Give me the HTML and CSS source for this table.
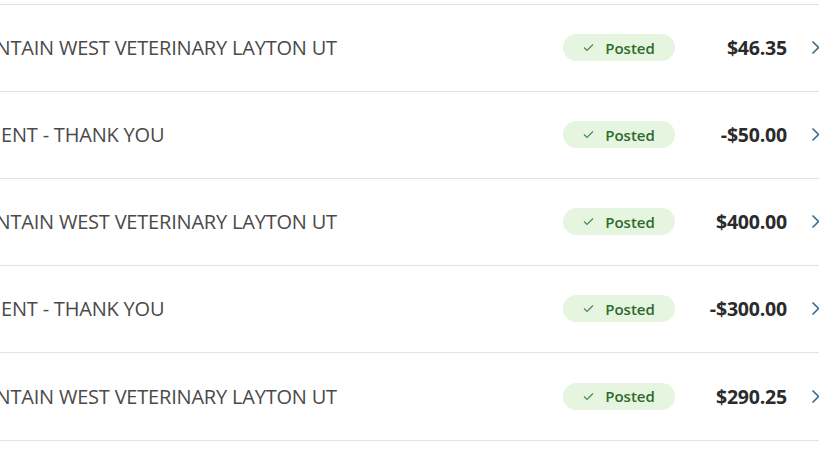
FILE: index.html
```html
<!DOCTYPE html>
<html lang="en">

<head>
    <meta charset="UTF-8">
    <meta name="viewport" content="width=device-width, initial-scale=1.0">
    <title>Transactions</title>
    <link rel="stylesheet" href="styles.css">
</head>

<body>
    <ul class="tx-list">
        <li class="tx-row">
            <span class="tx-desc">MOUNTAIN WEST VETERINARY LAYTON UT</span>
            <span class="tx-status"><svg class="tick" width="11" height="9" viewBox="0 0 11 9"><path d="M1 4.5 L4 7.5 L10 1.5" fill="none" stroke="currentColor" stroke-width="1.2"/></svg>Posted</span>
            <span class="tx-amount">$46.35</span>
            <span class="tx-more"><svg width="10" height="15" viewBox="0 0 10 15"><path d="M1.5 1.5 L7.5 7.5 L1.5 13.5" fill="none" stroke="currentColor" stroke-width="1.6"/></svg></span>
        </li>
        <li class="tx-row">
            <span class="tx-desc">PAYMENT - THANK YOU</span>
            <span class="tx-status"><svg class="tick" width="11" height="9" viewBox="0 0 11 9"><path d="M1 4.5 L4 7.5 L10 1.5" fill="none" stroke="currentColor" stroke-width="1.2"/></svg>Posted</span>
            <span class="tx-amount">-$50.00</span>
            <span class="tx-more"><svg width="10" height="15" viewBox="0 0 10 15"><path d="M1.5 1.5 L7.5 7.5 L1.5 13.5" fill="none" stroke="currentColor" stroke-width="1.6"/></svg></span>
        </li>
        <li class="tx-row">
            <span class="tx-desc">MOUNTAIN WEST VETERINARY LAYTON UT</span>
            <span class="tx-status"><svg class="tick" width="11" height="9" viewBox="0 0 11 9"><path d="M1 4.5 L4 7.5 L10 1.5" fill="none" stroke="currentColor" stroke-width="1.2"/></svg>Posted</span>
            <span class="tx-amount">$400.00</span>
            <span class="tx-more"><svg width="10" height="15" viewBox="0 0 10 15"><path d="M1.5 1.5 L7.5 7.5 L1.5 13.5" fill="none" stroke="currentColor" stroke-width="1.6"/></svg></span>
        </li>
        <li class="tx-row">
            <span class="tx-desc">PAYMENT - THANK YOU</span>
            <span class="tx-status"><svg class="tick" width="11" height="9" viewBox="0 0 11 9"><path d="M1 4.5 L4 7.5 L10 1.5" fill="none" stroke="currentColor" stroke-width="1.2"/></svg>Posted</span>
            <span class="tx-amount">-$300.00</span>
            <span class="tx-more"><svg width="10" height="15" viewBox="0 0 10 15"><path d="M1.5 1.5 L7.5 7.5 L1.5 13.5" fill="none" stroke="currentColor" stroke-width="1.6"/></svg></span>
        </li>
        <li class="tx-row">
            <span class="tx-desc">MOUNTAIN WEST VETERINARY LAYTON UT</span>
            <span class="tx-status"><svg class="tick" width="11" height="9" viewBox="0 0 11 9"><path d="M1 4.5 L4 7.5 L10 1.5" fill="none" stroke="currentColor" stroke-width="1.2"/></svg>Posted</span>
            <span class="tx-amount">$290.25</span>
            <span class="tx-more"><svg width="10" height="15" viewBox="0 0 10 15"><path d="M1.5 1.5 L7.5 7.5 L1.5 13.5" fill="none" stroke="currentColor" stroke-width="1.6"/></svg></span>
        </li>
    </ul>
</body>

</html>
```

FILE: styles.css
```css
body {
    font-family: 'Open Sans', sans-serif;
    background-color: #ffffff;
    color: #4a4a4a;
    margin: 0;
    padding: 0;
    overflow: hidden;
}

.tx-list {
    list-style: none;
    margin: 4px 0 0 -52px;
    padding: 0;
    width: 891px;
}

.tx-row {
    display: flex;
    align-items: center;
    box-sizing: border-box;
    height: 87px;
    padding-bottom: 1px;
    border-top: 1px solid #e2e2e2;
}

.tx-row:last-child {
    height: 89px;
    border-bottom: 1px solid #e2e2e2;
}

.tx-desc {
    flex: 1;
    font-size: 20px;
    letter-spacing: -0.2px;
    color: #4a4a4a;
    white-space: nowrap;
}

.tx-status {
    display: flex;
    align-items: center;
    justify-content: center;
    width: 112px;
    height: 27px;
    border-radius: 14px;
    background-color: #e5f5e0;
    color: #2f6b2c;
    font-size: 15px;
    font-weight: 600;
}

.tick {
    margin-right: 11px;
    color: #4b8a48;
}

.tx-amount {
    width: 112px;
    text-align: right;
    font-size: 19.5px;
    font-weight: 700;
    letter-spacing: -0.2px;
    color: #2b2b2b;
}

.tx-more {
    display: flex;
    align-items: center;
    margin-left: 24px;
    width: 28px;
    color: #3e6d8c;
}
```
